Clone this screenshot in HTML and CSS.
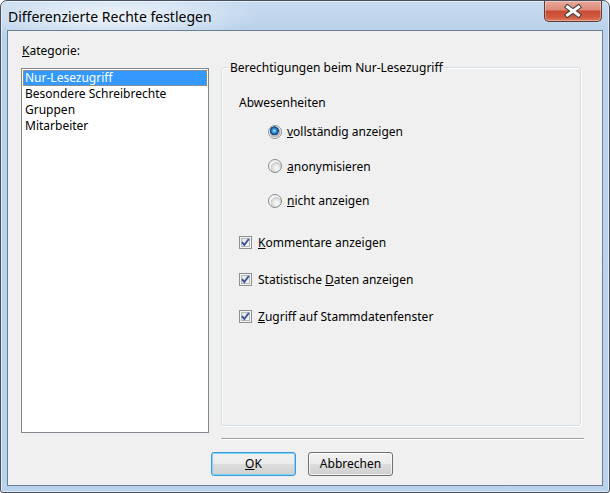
FILE: index.html
```html
<!DOCTYPE html>
<html lang="de">
<head>
<meta charset="utf-8">
<title>Differenzierte Rechte festlegen</title>
<link rel="stylesheet" href="styles.css">
</head>
<body>
<div class="window">
  <div class="titlebar">
    <span class="title">Differenzierte Rechte festlegen</span>
    <div class="close">
      <svg width="20" height="14" viewBox="-10 -7 20 14">
        <path d="M-5.5 -4 L5.5 4 M5.5 -4 L-5.5 4" stroke="#3d3d3d" stroke-width="5" stroke-linecap="square" fill="none"/>
        <path d="M-5.5 -4 L5.5 4 M5.5 -4 L-5.5 4" stroke="#ffffff" stroke-width="3" stroke-linecap="square" fill="none"/>
      </svg>
    </div>
  </div>
  <div class="client">
    <div class="main">
      <div class="left">
        <div class="label"><u>K</u>ategorie:</div>
        <div class="listbox">
          <div class="item selected">Nur-Lesezugriff</div>
          <div class="item">Besondere Schreibrechte</div>
          <div class="item">Gruppen</div>
          <div class="item">Mitarbeiter</div>
        </div>
      </div>
      <div class="group">
        <span class="legend">Berechtigungen beim Nur-Lesezugriff</span>
        <div class="subhead">Abwesenheiten</div>
        <div class="radios">
          <div class="opt ropt"><span class="rb checked"></span><span><u>v</u>ollständig anzeigen</span></div>
          <div class="opt ropt"><span class="rb"></span><span><u>a</u>nonymisieren</span></div>
          <div class="opt ropt"><span class="rb"></span><span><u>n</u>icht anzeigen</span></div>
        </div>
        <div class="checks">
          <div class="opt"><span class="cb"><svg width="11" height="11" viewBox="0 0 11 11"><path d="M2 5.2 L4.3 8 L8.8 2" stroke="#3a5396" stroke-width="1.9" fill="none"/></svg></span><span><u>K</u>ommentare anzeigen</span></div>
          <div class="opt"><span class="cb"><svg width="11" height="11" viewBox="0 0 11 11"><path d="M2 5.2 L4.3 8 L8.8 2" stroke="#3a5396" stroke-width="1.9" fill="none"/></svg></span><span>Statistische <u>D</u>aten anzeigen</span></div>
          <div class="opt"><span class="cb"><svg width="11" height="11" viewBox="0 0 11 11"><path d="M2 5.2 L4.3 8 L8.8 2" stroke="#3a5396" stroke-width="1.9" fill="none"/></svg></span><span><u>Z</u>ugriff auf Stammdatenfenster</span></div>
        </div>
      </div>
    </div>
    <div class="sep"></div>
    <div class="buttons">
      <button class="btn default"><u>O</u>K</button>
      <button class="btn">Abbrechen</button>
    </div>
  </div>
</div>
</body>
</html>
```

FILE: styles.css
```css
html, body {
  margin: 0;
  padding: 0;
  background: #ffffff;
}

.window {
  width: 610px;
  height: 493px;
  box-sizing: border-box;
  border: 1px solid #47505c;
  border-radius: 7px 7px 3px 3px;
  background:
    radial-gradient(ellipse 150px 26px at 110px 16px, rgba(255,255,255,0.75), rgba(255,255,255,0) 100%),
    linear-gradient(180deg, #c9dcf0 0px, #b9d1ea 30px, #bad2eb 100%);
  box-shadow: inset 0 0 0 1px rgba(255,255,255,0.55);
  display: flex;
  flex-direction: column;
  overflow: hidden;
  font-family: "Noto Sans", "Open Sans", sans-serif;
  font-size: 12px;
  color: #000;
}

.titlebar {
  height: 29px;
  flex: none;
  display: flex;
  justify-content: space-between;
  align-items: flex-start;
  padding: 0 7px 0 7px;
}

.title {
  font-size: 14px;
  line-height: 20px;
  padding-top: 6px;
  color: #000;
}

.close {
  width: 58px;
  height: 21px;
  box-sizing: border-box;
  border: 1px solid #5e3a36;
  border-top: none;
  border-radius: 0 0 5px 5px;
  background: linear-gradient(180deg, #e9a99b 0%, #dd8a77 45%, #c94a35 50%, #cf5a3f 80%, #e07a5a 100%);
  box-shadow: inset 0 0 0 1px rgba(255,255,255,0.35);
  display: flex;
  align-items: center;
  justify-content: center;
}

.client {
  flex: 1;
  margin: 0 6px 6px 6px;
  border: 1px solid #6d7f93;
  background: #f0f0f0;
}

.main {
  display: flex;
  align-items: flex-start;
}

.left {
  margin-left: 13px;
  width: 188px;
  padding-top: 12px;
}

.label {
  padding-left: 1px;
  line-height: 15px;
  height: 15px;
  margin-bottom: 10px;
}

.listbox {
  height: 365px;
  box-sizing: border-box;
  border: 1px solid #828790;
  background: #ffffff;
  padding: 1px;
}

.item {
  height: 16px;
  line-height: 16px;
  padding-left: 2px;
  white-space: nowrap;
}

.item.selected {
  background: #3399ff;
  color: #ffffff;
  outline: 1px dotted #d38a3a;
  outline-offset: -1px;
}

.group {
  margin-left: 12px;
  margin-top: 36px;
  width: 360px;
  height: 359px;
  box-sizing: border-box;
  border: 1px solid #d5dfe5;
  border-radius: 3px;
  box-shadow: inset 1px 1px 0 #ffffff, 1px 1px 0 #ffffff;
  padding-left: 17px;
}

.legend {
  display: table;
  margin: -8px 0 0 -10px;
  padding: 0 1px;
  line-height: 15px;
  background: #f0f0f0;
}

.subhead {
  margin-top: 20px;
  line-height: 15px;
}

.radios {
  margin-top: 14px;
  margin-left: 29px;
  display: flex;
  flex-direction: column;
  gap: 19.5px;
}

.checks {
  margin-top: 27px;
  display: flex;
  flex-direction: column;
  gap: 22px;
}

.opt {
  display: flex;
  align-items: center;
  gap: 6px;
  height: 15px;
  line-height: 15px;
  white-space: nowrap;
}

.ropt {
  gap: 5px;
}

.rb {
  width: 14px;
  height: 14px;
  box-sizing: border-box;
  border-radius: 50%;
  border: 1px solid #8a8c8e;
  background: radial-gradient(circle at 62% 66%, #fbfbfb 0, #e8e8e8 3px, #cdcdcd 5.5px, #f2f2f2 6px);
  flex: none;
}

.rb.checked {
  background:
    radial-gradient(circle at 44% 40%, #c8ecff 0, #48a6e8 1.6px, #1c64b0 3.2px, #0d3b74 4.2px, rgba(13,59,116,0) 4.7px),
    radial-gradient(circle at 50% 50%, #c8c8c8 0, #b4b4b4 5px, #f4f4f4 5.6px);
}

.cb {
  width: 13px;
  height: 13px;
  box-sizing: border-box;
  border: 1px solid #8e8f8f;
  background: linear-gradient(135deg, #dfdfdf, #fafafa);
  box-shadow: inset 0 0 0 1px #f4f4f4, inset 0 0 0 2px #b3b8bd;
  display: flex;
  align-items: center;
  justify-content: center;
  flex: none;
}

.cb svg {
  display: block;
}

.sep {
  margin: 5px 0 0 213px;
  width: 363px;
  border-top: 1px solid #a0a0a0;
  border-bottom: 1px solid #ffffff;
}

.buttons {
  margin: 12px 0 0 203px;
  display: flex;
  gap: 12px;
}

.btn {
  width: 85px;
  height: 24px;
  box-sizing: border-box;
  border: 1px solid #707070;
  border-radius: 3px;
  background: linear-gradient(180deg, #f2f2f2 0%, #ebebeb 50%, #dddddd 51%, #cfcfcf 100%);
  box-shadow: inset 0 0 0 1px rgba(255,255,255,0.7);
  font-family: "Noto Sans", "Open Sans", sans-serif;
  font-size: 12px;
  color: #000;
  padding: 0;
  line-height: 20px;
}

.btn.default {
  border-color: #3c9bd8;
  box-shadow: inset 0 0 0 1px #7fd3f7;
}
```
